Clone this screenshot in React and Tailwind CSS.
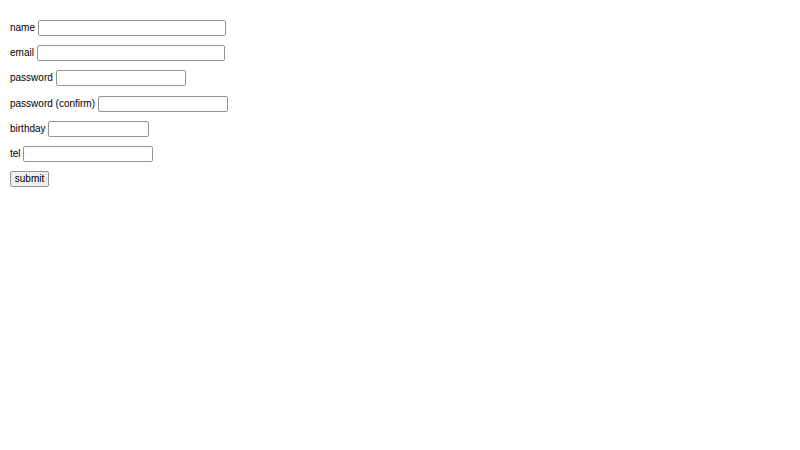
export default function App() {
  const rows = [
    { label: "name", w: "w-[188px]", type: "text" },
    { label: "email", w: "w-[188px]", type: "email" },
    { label: "password", w: "w-[130px]", type: "password" },
    { label: "password (confirm)", w: "w-[130px]", type: "password" },
    { label: "birthday", w: "w-[101px]", type: "text" },
    { label: "tel", w: "w-[130px]", type: "tel" },
  ];
  return (
    <div className="min-h-[450px] w-full bg-white pl-[10px] pt-[20px] font-['Liberation_Sans',Arial,sans-serif] text-[10px] text-black">
      <form className="flex flex-col gap-[9.2px]" onSubmit={(e) => e.preventDefault()}>
        <div className="flex flex-col gap-[9.2px]">
          {rows.map((r) => (
            <div key={r.label} className="flex h-[16px] items-center">
              <label className="leading-[16px] whitespace-pre">{r.label + " "}</label>
              <input
                type={r.type}
                className={`h-[16px] ${r.w} rounded-[2px] border border-[#949494] bg-white px-[2px] text-[10px] outline-none`}
              />
            </div>
          ))}
        </div>
        <div className="flex h-[16px] items-center">
          <button
            type="submit"
            className="h-[16px] w-[39px] rounded-[2px] border border-[#949494] bg-[#efefef] text-[10px] leading-[14px] text-black"
          >
            submit
          </button>
        </div>
      </form>
    </div>
  );
}
